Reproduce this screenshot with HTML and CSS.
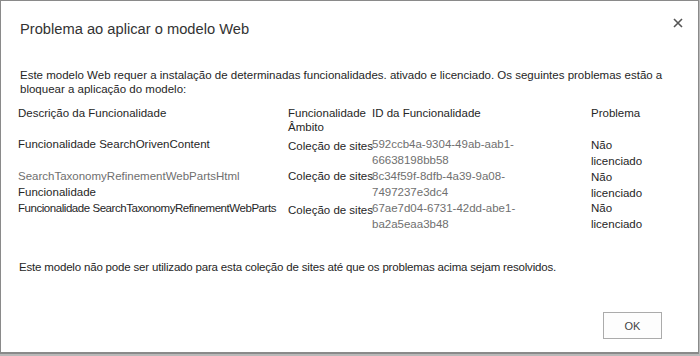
FILE: index.html
```html
<!DOCTYPE html>
<html lang="pt">
<head>
<meta charset="utf-8">
<link rel="stylesheet" href="styles.css">
</head>
<body>
<div class="dialog">
  <div class="header">
    <h1 class="title">Problema ao aplicar o modelo Web</h1>
    <button class="close" aria-label="Fechar">
      <svg width="10" height="10" viewBox="0 0 10 10"><path d="M1 1L9 9M9 1L1 9" stroke="#555" stroke-width="1.6"/></svg>
    </button>
  </div>
  <p class="intro">Este modelo Web requer a instalação de determinadas funcionalidades. ativado e licenciado. Os seguintes problemas estão a bloquear a aplicação do modelo:</p>
  <div class="grid">
    <div class="cell hd">Descrição da Funcionalidade</div>
    <div class="cell hd">Funcionalidade<br>Âmbito</div>
    <div class="cell hd">ID da Funcionalidade</div>
    <div class="cell hd">Problema</div>

    <div class="cell">Funcionalidade SearchOrivenContent</div>
    <div class="cell scope low">Coleção de sites</div>
    <div class="cell guid">592ccb4a-9304-49ab-aab1-<br>66638198bb58</div>
    <div class="cell low1">Não<br>licenciado</div>

    <div class="cell"><span class="grey">SearchTaxonomyRefinementWebPartsHtml</span><br>Funcionalidade</div>
    <div class="cell scope">Coleção de sites</div>
    <div class="cell guid">8c34f59f-8dfb-4a39-9a08-<br>7497237e3dc4</div>
    <div class="cell low1">Não<br>licenciado</div>

    <div class="cell cond">Funcionalidade SearchTaxonomyRefinementWebParts</div>
    <div class="cell scope low">Coleção de sites</div>
    <div class="cell guid">67ae7d04-6731-42dd-abe1-<br>ba2a5eaa3b48</div>
    <div class="cell">Não<br>licenciado</div>
  </div>
  <p class="footer-text">Este modelo não pode ser utilizado para esta coleção de sites até que os problemas acima sejam resolvidos.</p>
  <div class="actions">
    <button class="ok">OK</button>
  </div>
</div>
</body>
</html>
```
FILE: styles.css
```css
html, body {
  margin: 0;
  padding: 0;
  background: #b9b9b9;
}
body {
  width: 700px;
  height: 356px;
  overflow: hidden;
  font-family: "Liberation Sans", Arial, sans-serif;
  color: #262626;
}
.dialog {
  box-sizing: border-box;
  width: 699px;
  height: 354px;
  background: #fff;
  border: 1px solid #8a8a8a;
  border-bottom: 2px solid #8a8a8a;
  padding: 0 0 0 19px;
  display: flex;
  flex-direction: column;
}
.header {
  display: flex;
  justify-content: space-between;
  align-items: flex-start;
  padding-top: 19px;
}
.title {
  margin: 0;
  font-size: 14.7px;
  font-weight: normal;
  line-height: 19px;
  color: #333;
}
.close {
  border: 0;
  background: none;
  padding: 0;
  margin: -2px 15px 0 0;
  width: 10px;
  height: 10px;
  display: flex;
}
.intro {
  margin: 29px 30px 0 0;
  font-size: 11.5px;
  line-height: 14px;
  color: #262626;
}
.grid {
  display: grid;
  grid-template-columns: 270px 84px 219px 100px;
  grid-auto-rows: 32px;
  grid-template-rows: 30px;
  margin: 10px 0 0 -2px;
  font-size: 11.5px;
  line-height: 16px;
  color: #262626;
}
.cell {
  white-space: nowrap;
}
.hd {
  line-height: 14px;
}
.guid {
  color: #6f6f6f;
}
.grey { color: #6f6f6f; }
.low { padding-top: 2px; }
.low1 { padding-top: 1px; }
.cond {
  letter-spacing: -0.45px;
}
.footer-text {
  margin: 28px 0 0 -1px;
  font-size: 11.5px;
  line-height: 14px;
  letter-spacing: -0.18px;
  color: #262626;
}
.actions {
  display: flex;
  justify-content: flex-end;
  padding: 38px 36px 0 0;
}
.ok {
  width: 59px;
  height: 27px;
  border: 1px solid #ababab;
  background: #fdfdfd;
  font-family: "Liberation Sans", Arial, sans-serif;
  font-size: 11px;
  color: #444;
  padding: 0;
}
```
